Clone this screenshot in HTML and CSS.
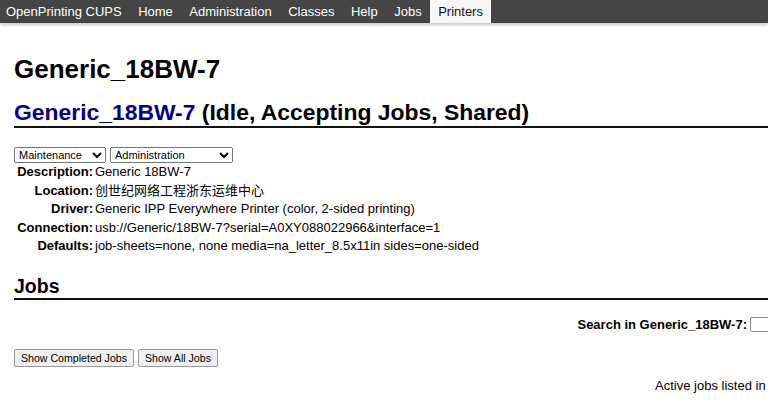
FILE: index.html
```
<!DOCTYPE html>
<html lang="en">
<head>
<meta charset="utf-8">
<title>Generic_18BW-7 - CUPS</title>
<link rel="stylesheet" href="styles.css">
</head>
<body>
<nav class="header">
  <ul class="menu">
    <li><a class="brand" href="#">OpenPrinting CUPS</a></li>
    <li><a href="#">Home</a></li>
    <li><a href="#">Administration</a></li>
    <li><a href="#">Classes</a></li>
    <li><a href="#">Help</a></li>
    <li><a href="#">Jobs</a></li>
    <li><a class="active" href="#">Printers</a></li>
  </ul>
</nav>
<main class="page">
  <div class="content">
    <h1 class="title">Generic_18BW-7</h1>
    <h2 class="section"><a class="plink" href="#">Generic_18BW-7</a> (Idle, Accepting Jobs, Shared)</h2>
    <form class="actions">
      <select class="sel sel-maint"><option>Maintenance</option></select>
      <select class="sel sel-admin"><option>Administration</option></select>
    </form>
    <table class="details">
      <tr><th>Description:</th><td>Generic 18BW-7</td></tr>
      <tr><th>Location:</th><td class="cjk">创世纪网络工程浙东运维中心</td></tr>
      <tr><th>Driver:</th><td>Generic IPP Everywhere Printer (color, 2-sided printing)</td></tr>
      <tr><th>Connection:</th><td>usb://Generic/18BW-7?serial=A0XY088022966&amp;interface=1</td></tr>
      <tr><th>Defaults:</th><td>job-sheets=none, none media=na_letter_8.5x11in sides=one-sided</td></tr>
    </table>
    <h2 class="section jobs">Jobs</h2>
    <form class="search">
      <label class="search-label" for="q">Search in Generic_18BW-7:</label>
      <input class="search-input" id="q" type="search">
    </form>
    <div class="buttons">
      <button class="btn" type="button">Show Completed Jobs</button>
      <button class="btn" type="button">Show All Jobs</button>
    </div>
    <p class="note">Active jobs listed in print order; held jobs appear first.</p>
  </div>
</main>
</body>
</html>
```
FILE: styles.css
```
html, body {
  margin: 0;
  padding: 0;
  overflow: hidden;
  background: #ffffff;
}
body {
  font-family: "Liberation Sans", Arial, "Noto Sans CJK SC", sans-serif;
  font-size: 13px;
  color: #000;
}
.header {
  background: #444444;
  height: 23px;
  box-shadow: 0 2px 3px rgba(0, 0, 0, 0.22);
}
.menu {
  list-style: none;
  margin: 0;
  padding: 0;
  display: flex;
}
.menu a {
  display: block;
  height: 23px;
  line-height: 23px;
  padding: 0 8.25px;
  color: #ffffff;
  text-decoration: none;
  font-size: 13px;
}
.menu a.brand {
  padding-left: 6px;
}
.menu a.active {
  background: #f7f7f7;
  color: #111;
}
.page {
  padding: 0 14px;
}
.content {
  width: 946px;
}
.title {
  font-size: 26px;
  line-height: 30px;
  margin: 31px 0 0;
  font-weight: bold;
}
.section {
  font-size: 22.9px;
  line-height: 26px;
  margin: 15px 0 0;
  padding-bottom: 1px;
  border-bottom: 2px solid #111;
  font-weight: bold;
}
.plink {
  color: #00008b;
  text-decoration: none;
}
.actions {
  display: flex;
  gap: 4px;
  margin: 19px 0 0;
  height: 16px;
}
.sel {
  height: 16px;
  font-family: "Liberation Sans", Arial, sans-serif;
  font-size: 11px;
  padding: 0;
  margin: 0;
}
.sel-maint { width: 92px; }
.sel-admin { width: 123px; }
.details {
  border-collapse: collapse;
  margin: 0;
}
.details th,
.details td {
  padding: 0;
  line-height: 18.5px;
  vertical-align: middle;
  white-space: nowrap;
}
.details th {
  width: 79px;
  text-align: right;
  font-weight: bold;
}
.details td {
  padding-left: 2px;
}
.cjk {
  font-family: "Liberation Sans", "Noto Sans CJK SC", sans-serif;
}
.section.jobs {
  font-size: 19.5px;
  line-height: 22px;
  margin-top: 19px;
}
.search {
  display: flex;
  justify-content: flex-end;
  align-items: center;
  gap: 3px;
  margin: 15px 0 0;
  height: 20px;
}
.search-label {
  font-weight: bold;
}
.search-input {
  width: 210px;
  height: 15px;
  box-sizing: border-box;
  border: 1px solid #8a8a8a;
  border-radius: 2px;
  margin: 0;
  padding: 0;
}
.buttons {
  display: flex;
  gap: 4px;
  margin-top: 14px;
}
.btn {
  height: 18px;
  padding: 0 6px;
  font-family: "Liberation Sans", Arial, sans-serif;
  font-size: 10.6px;
  background: #efefef;
  border: 1px solid #9a9a9a;
  border-radius: 2px;
  color: #000;
  margin: 0;
}
.note {
  text-align: right;
  margin: 11px 0 0;
  line-height: 15px;
}
```
